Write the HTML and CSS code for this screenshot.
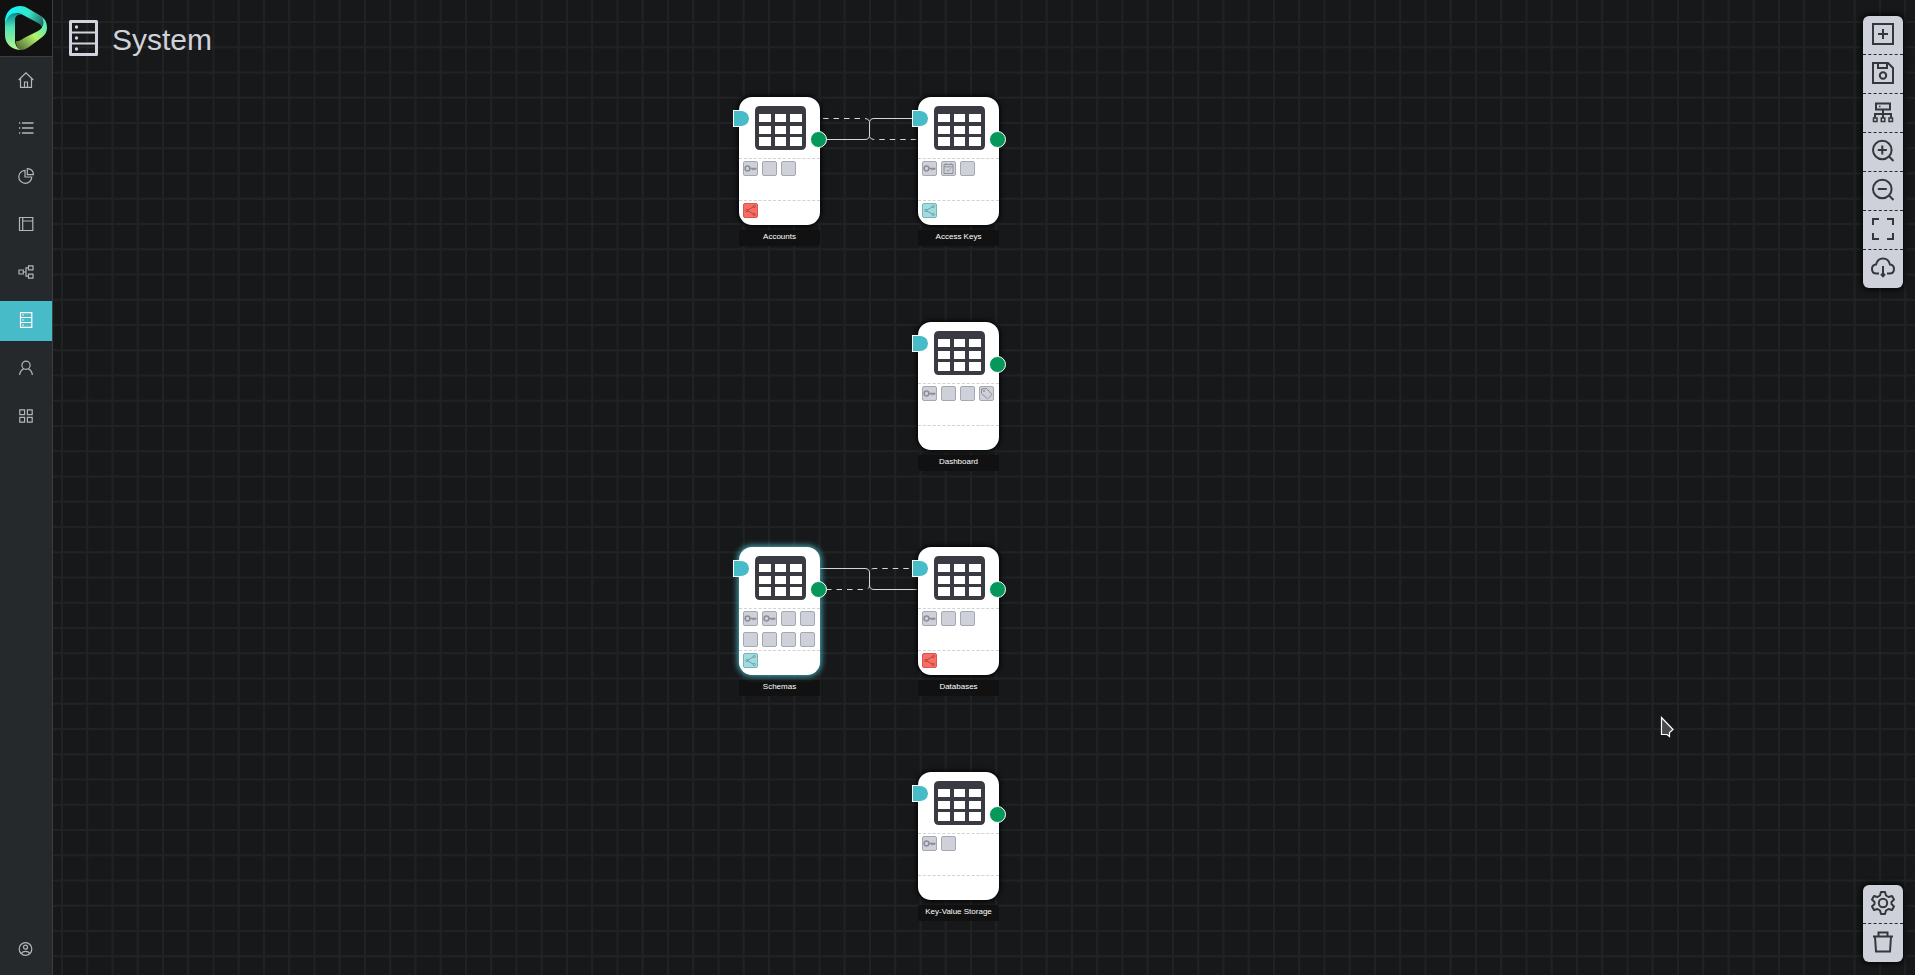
FILE: index.html
```html
<!DOCTYPE html>
<html lang="en">
<head>
<meta charset="utf-8">
<title>System</title>
<link rel="stylesheet" href="styles.css">
</head>
<body>
<svg class="sprite" aria-hidden="true">
  <symbol id="table" viewBox="0 0 51 44">
    <path fill="#393a42" fill-rule="evenodd" d="M5 0H46Q51 0 51 5V39Q51 44 46 44H5Q0 44 0 39V5Q0 0 5 0ZM4 8V16H16V8ZM20 8V16H31V8ZM35 8V16H47V8ZM4 20V28H16V20ZM20 20V28H31V20ZM35 20V28H47V20ZM4 31V40H16V31ZM20 31V40H31V31ZM35 31V40H47V31Z"/>
  </symbol>
  <symbol id="key" viewBox="0 0 15 15">
    <g fill="none" stroke="#8c8e96" stroke-width="1.500"><circle cx="4.500" cy="7.500" r="2.400"/><path d="M7 7.500H13.500M10 7.500V9.300M12.200 7.500V9"/></g>
  </symbol>
  <symbol id="calendar" viewBox="0 0 15 15">
    <g fill="none" stroke="#8c8e96"><path d="M3 3.500H12V12.500H3ZM3 5.800H12M5 2V4M10 2V4M5.500 8.800L7 10.300L9.800 7.400"/></g>
  </symbol>
  <symbol id="tag" viewBox="0 0 15 15">
    <g fill="none" stroke="#8c8e96"><path d="M2.500 3L7.500 2.500L13 8.500L8.500 12.800L2.500 7.500Z"/><circle cx="5" cy="5" r=".6"/></g>
  </symbol>
  <symbol id="share" viewBox="0 0 15 15">
    <g fill="none" stroke="currentColor"><path d="M11 3.500L4 7.500L11 11.500"/><circle cx="3.800" cy="7.500" r="1.100"/><circle cx="11.300" cy="3.500" r="1.100"/><circle cx="11.300" cy="11.500" r="1.100"/></g>
  </symbol>
</svg>

<aside class="sidebar">
  <a class="logo" href="#" aria-label="Start">
    <svg width="52" height="56" viewBox="0 0 52 56">
      <defs>
        <linearGradient id="la" gradientUnits="userSpaceOnUse" x1="12" y1="12" x2="14" y2="50"><stop offset="0" stop-color="#087f8c"/><stop offset=".4" stop-color="#4ce5b7"/><stop offset="1" stop-color="#b9f58a"/></linearGradient>
        <linearGradient id="lb" gradientUnits="userSpaceOnUse" x1="8" y1="12" x2="42" y2="26"><stop offset="0" stop-color="#12f3f7"/><stop offset=".55" stop-color="#35e5c8"/><stop offset="1" stop-color="#25695b"/></linearGradient>
        <linearGradient id="lc" gradientUnits="userSpaceOnUse" x1="45" y1="20" x2="18" y2="46"><stop offset="0" stop-color="#45edc4"/><stop offset=".5" stop-color="#b5f26c"/><stop offset="1" stop-color="#5d783a"/></linearGradient>
      </defs>
      <path fill="url(#la)" d="M5 24C5 15 11 10 22 15C18 14 15 16 15 20V40C15 45 17 49 22 50C12 50 5 44 5 35Z"/>
      <path fill="url(#lb)" d="M5 24C4 12 12 6 20 6C24 6 26 7 29 9L41 16C44 18 46 21 46 24L42 30C43 27 41 25 38 23L23 15C14 10 7 15 5 24Z"/>
      <path fill="url(#lc)" d="M42 17C46 20 47 24 47 28C47 32 45 35 41 38L29 47C26 49 24 50 21 50C17 49 16 45 16 41C18 42 21 40 24 38L38 31C45 27 44 21 42 17Z"/>
    </svg>
  </a>
  <nav class="menu">
    <a href="#" aria-label="Home"><svg class="icon" viewBox="0 0 16 16"><path d="M.7 8L8 .8L15.300 8M2.500 6.500V15.300H13.500V6.500M6.500 15V10H9.500V15"/></svg></a>
    <a href="#" aria-label="List"><svg class="icon" viewBox="0 0 16 16"><path d="M4 3H15.500M4 8H15.500M4 13H15.500M1 3H2.300M1 8H2.300M1 13H2.300" stroke-width="1.500"/></svg></a>
    <a href="#" aria-label="Charts"><svg class="icon" viewBox="0 0 16 16"><path d="M7 2.300A6.500 6.500 0 1 0 13.800 9H7ZM9.300 .7V6.700H15.400C15.300 3.200 12.800 .8 9.300 .7Z"/></svg></a>
    <a href="#" aria-label="Pages"><svg class="icon" viewBox="0 0 16 16"><path d="M1.500 1.500H14.800V14.500H1.500ZM4.700 1.500V14.500M4.700 5H14.800"/></svg></a>
    <a href="#" aria-label="Flows"><svg class="icon" viewBox="0 0 16 16"><path d="M1 6H5.300V10H1ZM10.500 1.800H15V5.800H10.500ZM10.500 10.200H15V14.200H10.500ZM5.300 8H8M10.500 3.800H8V12.200H10.500"/></svg></a>
    <a class="active" href="#" aria-label="System"><svg class="icon" viewBox="0 0 16 16"><path d="M2.500 .6H13.800V15.400H2.500ZM2.500 5.500H13.800M2.500 10.500H13.800M4.300 3H6M4.300 8H6M4.300 13H6"/></svg></a>
    <a href="#" aria-label="User"><svg class="icon" viewBox="0 0 16 16"><circle cx="8" cy="5.200" r="4.100"/><path d="M1.600 15C2 11.500 3.500 9.700 5.800 8.600M14.400 15C14 11.500 12.500 9.700 10.200 8.600"/></svg></a>
    <a href="#" aria-label="Apps"><svg class="icon" viewBox="0 0 16 16"><path d="M1.800 1.800H6.600V6.600H1.800ZM9.400 1.800H14.200V6.600H9.400ZM1.800 9.400H6.600V14.200H1.800ZM9.400 9.400H14.200V14.200H9.400Z"/></svg></a>
  </nav>
  <a class="account" href="#" aria-label="Account"><svg class="icon" viewBox="0 0 16 16"><circle cx="7.500" cy="8" r="6.300"/><circle cx="7.500" cy="6.200" r="2"/><path d="M3.300 12.400C5 9.800 10 9.800 11.700 12.400"/></svg></a>
</aside>

<main class="canvas">
  <svg class="grid" width="100%" height="100%" aria-hidden="true">
    <defs><pattern id="mesh" width="101" height="101" x="8" y="21" patternUnits="userSpaceOnUse">
      <path d="M1 0V101M26.200 0V101M51.500 0V101M76.700 0V101M0 1H101M0 26.200H101M0 51.500H101M0 76.700H101" stroke="#202224" stroke-width="2"/>
    </pattern></defs>
    <rect width="100%" height="100%" fill="url(#mesh)"/>
  </svg>

  <header class="heading">
    <svg width="29" height="36" viewBox="0 0 29 36"><g fill="none" stroke="#d2d3de"><path stroke-width="3" stroke-linejoin="round" d="M1.500 1.500H27.500V34.500H1.500Z"/><path stroke-width="2" d="M2 12.500H27M2 23.500H27"/></g><g fill="#d2d3de"><circle cx="7.500" cy="7" r="1.700"/><circle cx="7.500" cy="18" r="1.700"/><circle cx="7.500" cy="29" r="1.700"/></g></svg>
    <h1>System</h1>
  </header>

  <svg class="link link-top" width="100" height="30" viewBox="0 0 100 30" aria-hidden="true">
    <path class="dashed" d="M4 4.500H46Q50.500 4.500 50.500 9V21Q50.500 25.500 55 25.500H98"/>
    <path d="M6 25.500H46Q50.500 25.500 50.500 21V9Q50.500 4.500 55 4.500H96"/>
  </svg>
  <svg class="link link-mid" width="100" height="30" viewBox="0 0 100 30" aria-hidden="true">
    <path class="dashed" d="M7 25.500H46Q50.500 25.500 50.500 21V9Q50.500 4.500 55 4.500H96"/>
    <path d="M1 4.500H46Q50.500 4.500 50.500 9V21Q50.500 25.500 55 25.500H98"/>
  </svg>

  <section class="node accounts">
    <div class="card">
      <div class="kind"><svg width="51" height="44"><use href="#table"/></svg></div>
      <div class="fields"><i><svg><use href="#key"/></svg></i><i></i><i></i></div>
      <div class="refs"><i class="red"><svg><use href="#share"/></svg></i></div>
      <b class="in"></b><b class="out"></b>
    </div>
    <h2>Accounts</h2>
  </section>
  <section class="node keys">
    <div class="card">
      <div class="kind"><svg width="51" height="44"><use href="#table"/></svg></div>
      <div class="fields"><i><svg><use href="#key"/></svg></i><i><svg><use href="#calendar"/></svg></i><i></i></div>
      <div class="refs"><i class="teal"><svg><use href="#share"/></svg></i></div>
      <b class="in"></b><b class="out"></b>
    </div>
    <h2>Access Keys</h2>
  </section>
  <section class="node dashboard">
    <div class="card">
      <div class="kind"><svg width="51" height="44"><use href="#table"/></svg></div>
      <div class="fields"><i><svg><use href="#key"/></svg></i><i></i><i></i><i><svg><use href="#tag"/></svg></i></div>
      <div class="refs"></div>
      <b class="in"></b><b class="out"></b>
    </div>
    <h2>Dashboard</h2>
  </section>
  <section class="node schemas selected">
    <div class="card">
      <div class="kind"><svg width="51" height="44"><use href="#table"/></svg></div>
      <div class="fields"><i><svg><use href="#key"/></svg></i><i><svg><use href="#key"/></svg></i><i></i><i></i><i></i><i></i><i></i><i></i></div>
      <div class="refs"><i class="teal"><svg><use href="#share"/></svg></i></div>
      <b class="in"></b><b class="out"></b>
    </div>
    <h2>Schemas</h2>
  </section>
  <section class="node databases">
    <div class="card">
      <div class="kind"><svg width="51" height="44"><use href="#table"/></svg></div>
      <div class="fields"><i><svg><use href="#key"/></svg></i><i></i><i></i></div>
      <div class="refs"><i class="red"><svg><use href="#share"/></svg></i></div>
      <b class="in"></b><b class="out"></b>
    </div>
    <h2>Databases</h2>
  </section>
  <section class="node storage">
    <div class="card">
      <div class="kind"><svg width="51" height="44"><use href="#table"/></svg></div>
      <div class="fields"><i><svg><use href="#key"/></svg></i><i></i></div>
      <div class="refs"></div>
      <b class="in"></b><b class="out"></b>
    </div>
    <h2>Key-Value Storage</h2>
  </section>

  <div class="tools tools-top">
    <button type="button" aria-label="Add"><svg viewBox="0 0 24 24"><path d="M2 2H22V22H2ZM12 7V17M7 12H17"/></svg></button>
    <button type="button" aria-label="Save"><svg viewBox="0 0 24 24"><path d="M2 2H17L22 7V22H2ZM7 2V7H16V2"/><circle cx="12" cy="14.500" r="3.200"/></svg></button>
    <button type="button" aria-label="Arrange"><svg viewBox="0 0 24 24"><path d="M5 3.500H19V9.500H5ZM12 9.500V18M4 18V14H20V18" /><path stroke-width="1.500" d="M2.500 18H6V21.500H2.500ZM10.300 18H13.800V21.500H10.300ZM18 18H21.500V21.500H18ZM8 6.500H9.500"/></svg></button>
    <button type="button" aria-label="Zoom in"><svg viewBox="0 0 24 24"><circle cx="11.300" cy="11" r="9.300"/><path d="M18 17.500L22.500 22M11.300 6.500V15.500M6.800 11H15.800"/></svg></button>
    <button type="button" aria-label="Zoom out"><svg viewBox="0 0 24 24"><circle cx="11.300" cy="11" r="9.300"/><path d="M18 17.500L22.500 22M6.800 11H15.800"/></svg></button>
    <button type="button" aria-label="Fit to screen"><svg viewBox="0 0 24 24"><path d="M2 8V2H8M16 2H22V8M22 16V22H16M8 22H2V16"/></svg></button>
    <button type="button" aria-label="Download"><svg viewBox="0 0 24 24"><path d="M8 17.500H5.500C2.500 17.500 1 15.500 1 13C1 10.500 2.500 8.800 5 8.500C6 4.500 8.500 2.500 12 2.500C15.500 2.500 18 4.500 19 8.500C21.500 8.800 23 10.500 23 13C23 15.500 21.500 17.500 18.500 17.500H16M12 10V20M10 18L12 20.300L14 18"/></svg></button>
  </div>
  <div class="tools tools-bottom">
    <button type="button" aria-label="Settings"><svg viewBox="0 0 24 24"><path d="M10 1H14L15 4.500L17.500 6L21 5L23 8.500L20.500 11V13L23 15.500L21 19L17.500 18L15 19.500L14 23H10L9 19.500L6.500 18L3 19L1 15.500L3.500 13V11L1 8.500L3 5L6.500 6L9 4.500Z" stroke-linejoin="round"/><circle cx="12" cy="12" r="4.200"/></svg></button>
    <button type="button" aria-label="Delete"><svg viewBox="0 0 24 24"><path d="M2 6.500H22M7.500 6V2.500H16.500V6M4 6.500L5 21.500H19L20 6.500"/></svg></button>
  </div>

  <svg class="pointer" width="15" height="24" viewBox="0 0 15 24" aria-hidden="true"><path d="M1.500 1.500L13 13.500L9.500 16.500V20.500L7 18.500H1.500Z" fill="#4a4a4c" stroke="#fff" stroke-width="1.200"/></svg>
</main>
</body>
</html>
```
FILE: styles.css
```css
* { box-sizing: border-box; }

body {
  display: flex;
  height: 100vh;
  margin: 0;
  overflow: hidden;
  background: #17181a;
  color: #d0d2da;
  font-family: "Liberation Sans", Arial, sans-serif;
}

svg { display: block; }
.sprite { position: absolute; width: 0; height: 0; }

/* Sidebar */
.sidebar {
  display: flex;
  flex-direction: column;
  flex: 0 0 53px;
  border-right: 1px solid #3a3d41;
  background: #25292c;
}
.logo {
  background: #111;
  border-bottom: 1px solid #3a3d41;
}
.menu {
  display: flex;
  flex: 1;
  flex-direction: column;
  gap: 8px;
  padding-top: 4px;
}
.menu a,
.account {
  display: flex;
  align-items: center;
  justify-content: center;
  height: 40px;
  padding-bottom: 2px;
  color: #b4b5b8;
}
.menu .active {
  background: #47bbc7;
  color: #fff;
}
.account { margin-bottom: 5px; }
.icon {
  width: 16px;
  height: 16px;
  fill: none;
  stroke: currentColor;
  stroke-width: 1.2;
}

/* Canvas */
.canvas {
  position: relative;
  flex: 1;
  overflow: hidden;
}
.grid {
  position: absolute;
  inset: 0;
}
.heading {
  position: relative;
  display: flex;
  align-items: flex-start;
  gap: 14px;
  padding: 20px 16px;
}
.heading h1 {
  margin: 0;
  font-size: 30px;
  font-weight: 400;
  line-height: 40px;
}

/* Links between nodes */
.link {
  position: absolute;
  left: 766px;
  fill: none;
  stroke: #d5d6d9;
}
.link-top { top: 114px; }
.link-mid { top: 564px; }
.dashed { stroke-dasharray: 5.500 5; }

/* Nodes */
.node {
  position: absolute;
  width: 81px;
}
.accounts { left: 686px; top: 97px; }
.keys { left: 865px; top: 97px; }
.dashboard { left: 865px; top: 322px; }
.schemas { left: 686px; top: 547px; }
.databases { left: 865px; top: 547px; }
.storage { left: 865px; top: 772px; }

.card {
  position: relative;
  border-radius: 13px;
  background: #fff;
  box-shadow: 0 0 5px 1px #000;
}
.selected .card { box-shadow: 0 0 6px 1px #47bbc7; }
.kind {
  height: 61px;
  padding: 9px 16px;
}
.fields,
.refs {
  display: grid;
  grid-template-columns: repeat(4, 15px);
  grid-auto-rows: 15px;
  gap: 6px 4px;
  padding: 2px 4px;
  border-top: 1px dashed #d2d2d5;
}
.fields { height: 42px; }
.refs { height: 25px; }
.card i {
  border: 1px solid #a6a8b1;
  border-radius: 2px;
  background: #cfd1da;
}
.card i svg {
  width: 15px;
  height: 15px;
  margin: -1px;
}
.card .red {
  border-color: #dc554f;
  background: #fa6c64;
  color: #ad4b48;
}
.card .teal {
  border-color: #78b5ba;
  background: #a0dde1;
  color: #6da2a5;
}
.in,
.out {
  position: absolute;
  border: 1px solid #fff;
}
.in {
  left: -6px;
  top: 13px;
  width: 16px;
  height: 17px;
  border-right: 0;
  border-radius: 0 8px 8px 0;
  background: #47bbc7;
}
.out {
  left: 71px;
  top: 34px;
  width: 17px;
  height: 17px;
  border-radius: 50%;
  background: #05985a;
}
.node h2 {
  margin: 5px 0 0;
  padding-bottom: 2px;
  border-radius: 2px;
  background: #111;
  color: #fff;
  font-size: 8px;
  font-weight: 400;
  line-height: 14px;
  text-align: center;
  white-space: nowrap;
}

/* Toolbars */
.tools {
  position: absolute;
  right: 12px;
  display: flex;
  flex-direction: column;
  width: 40px;
  border-radius: 6px;
  background: #cfd1da;
  box-shadow: 0 0 6px 1px #000;
}
.tools-top { top: 16px; }
.tools-bottom { bottom: 13px; }
.tools button {
  display: flex;
  align-items: center;
  justify-content: center;
  height: 39px;
  padding: 0 0 2px;
  border: 0;
  border-bottom: 1px dashed #25292c;
  background: none;
}
.tools button:last-child {
  height: 38px;
  border-bottom: 0;
}
.tools svg {
  width: 24px;
  height: 24px;
  fill: none;
  stroke: #35373d;
  stroke-width: 2;
}

.pointer {
  position: absolute;
  left: 1607px;
  top: 716px;
}
```
